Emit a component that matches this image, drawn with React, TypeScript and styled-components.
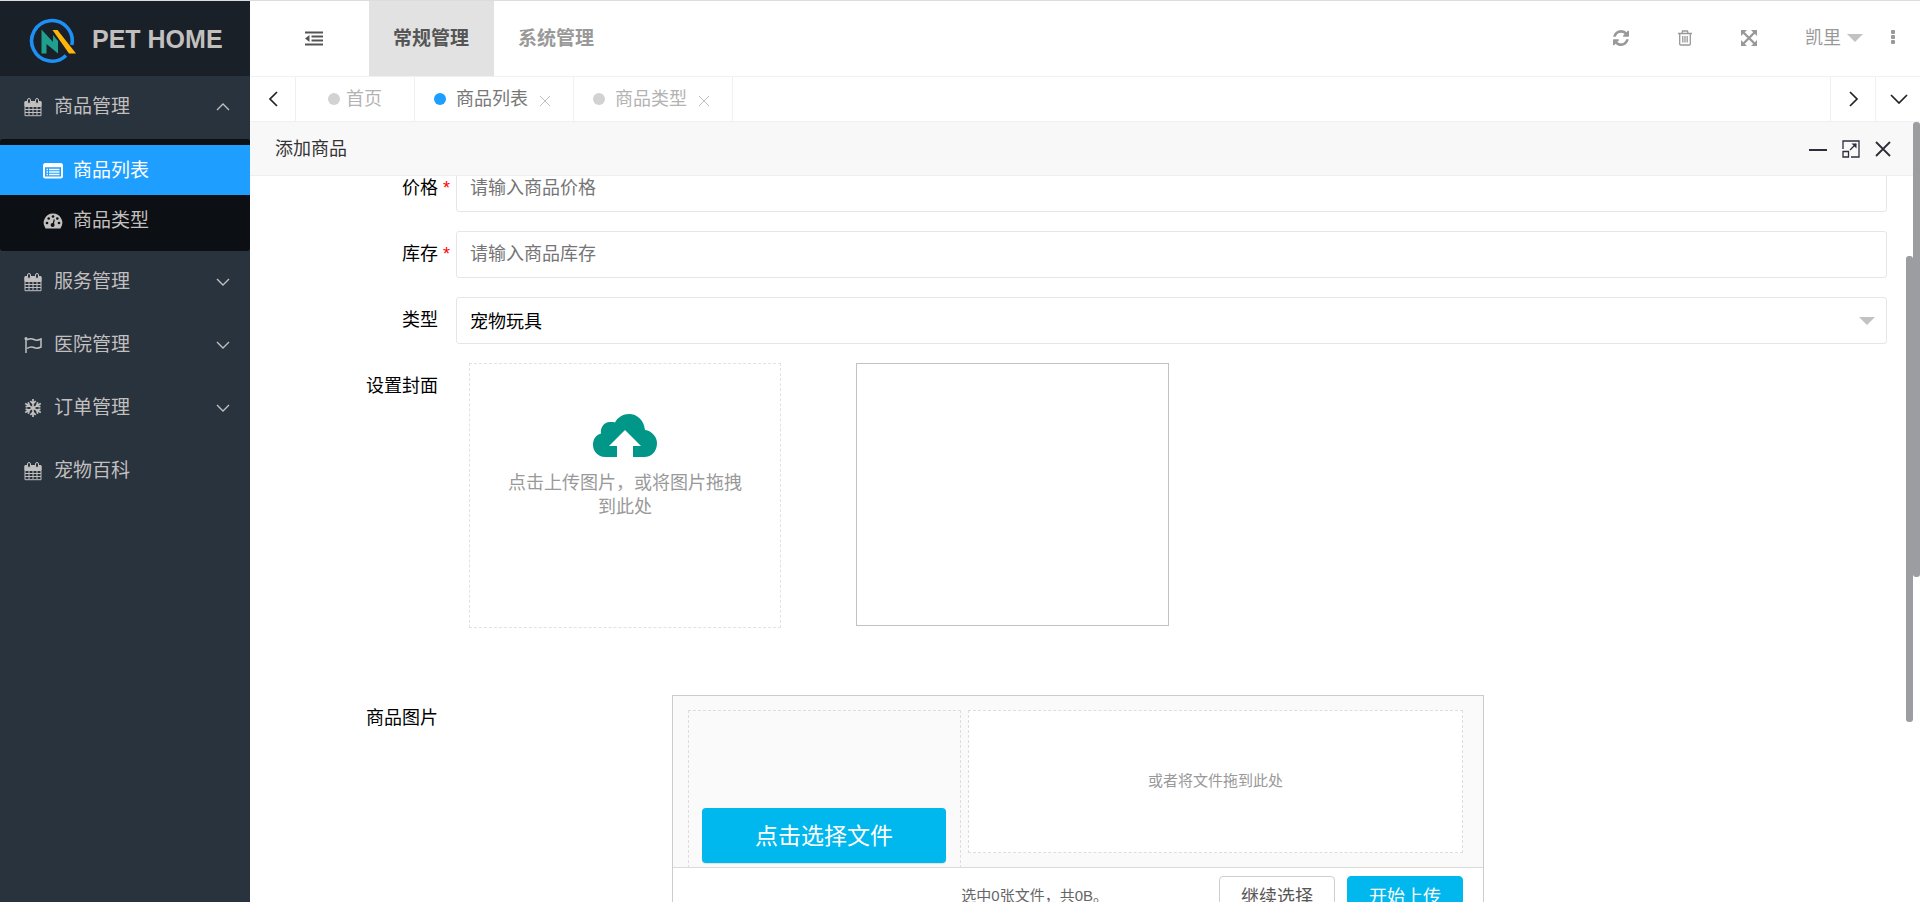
import React from 'react';
import styled, { createGlobalStyle, css } from 'styled-components';

const Global = createGlobalStyle`
  * { box-sizing: border-box; }
  html, body, #root { height: 100%; }
  body {
    margin: 0;
    overflow: hidden;
    background: #fff;
    color: #000;
    font-family: "Liberation Sans", "Noto Sans CJK SC", sans-serif;
    font-size: 18px;
    line-height: 24px;
  }
  button, input, select { font: inherit; color: inherit; }
  button { padding: 0; border: 0; background: none; cursor: pointer; }
  a { color: inherit; text-decoration: none; }
  svg { display: block; flex: none; }
  ul { margin: 0; padding: 0; list-style: none; }
`;

const Shell = styled.div`
  display: flex;
  height: 100vh;
  border-top: 1px solid #dcdcdc;
`;

/* ---------- sidebar ---------- */

const Sidebar = styled.aside`
  flex: none;
  width: 250px;
  background: #28333e;
  color: #c2bfbf;
  font-size: 19px;
`;

const Brand = styled.a`
  display: flex;
  align-items: center;
  gap: 16px;
  height: 75px;
  padding: 4px 0 0 28px;
  background: #192027;
  font-size: 25px;
  font-weight: bold;
  white-space: nowrap;
  line-height: 24px;
`;

const BrandName = styled.span`
  padding-bottom: 4px;
`;

const itemBase = css`
  display: flex;
  align-items: center;
  width: 100%;
  text-align: left;
`;

const MenuItem = styled.button`
  ${itemBase}
  gap: 12px;
  height: 63px;
  padding: 0 20px 1px 24px;
`;

const MenuText = styled.span`
  flex: 1;
`;

const SubMenu = styled.ul`
  padding: 6px 0;
  border-radius: 3px;
  background: #0c0f13;
`;

const SubItem = styled.a<{ $active?: boolean }>`
  ${itemBase}
  gap: 10px;
  height: 50px;
  padding: 1px 0 0 43px;
  background: ${p => (p.$active ? '#1e9fff' : 'transparent')};
  color: ${p => (p.$active ? '#fff' : 'inherit')};
`;

/* ---------- header ---------- */

const Main = styled.div`
  flex: 1;
  min-width: 0;
  display: flex;
  flex-direction: column;
`;

const Header = styled.header`
  display: flex;
  flex: none;
  height: 76px;
  border-bottom: 1px solid #f1f1f1;
  color: #999;
`;

const FoldButton = styled.button`
  display: flex;
  align-items: center;
  padding: 0 46px 0 55px;
  color: #555;
`;

const TopTab = styled.a<{ $active?: boolean }>`
  display: flex;
  align-items: center;
  padding: 0 25px 0 24px;
  font-size: 19px;
  font-weight: bold;
  background: ${p => (p.$active ? '#e2e2e2' : 'transparent')};
  color: ${p => (p.$active ? '#555' : '#999')};
`;

const Tools = styled.div`
  display: flex;
  align-items: center;
  gap: 48px;
  margin-left: auto;
  padding: 0 24px 2px 0;
`;

const UserGroup = styled.div`
  display: flex;
  align-items: center;
  gap: 28px;
`;

const ToolButton = styled.button`
  display: flex;
  align-items: center;
  gap: 6px;
`;

const Caret = styled.span`
  border: 8px solid transparent;
  border-top-color: #c2c2c2;
  border-bottom-width: 0;
`;

/* ---------- page tabs ---------- */

const TabBar = styled.div`
  display: flex;
  flex: none;
  height: 45px;
  border-bottom: 1px solid #f0f0f0;
`;

const TabArrow = styled.button<{ $side: 'left' | 'right' }>`
  display: flex;
  align-items: center;
  justify-content: center;
  width: ${p => (p.$side === 'left' ? 46 : 45)}px;
  padding-left: ${p => (p.$side === 'left' ? 0 : 2)}px;
  border-${p => (p.$side === 'left' ? 'right' : 'left')}: 1px solid #f0f0f0;
  color: #222;
`;

const TabList = styled.div`
  display: flex;
  flex: 1;
`;

const PageTab = styled.div<{ $active?: boolean; $home?: boolean }>`
  display: flex;
  align-items: center;
  padding: ${p => (p.$home ? '0 32px 1px' : '0 23px 1px 19px')};
  border-right: 1px solid #f0f0f0;
  color: ${p => (p.$active ? '#777' : '#b3b3b3')};
`;

const Dot = styled.span<{ $active?: boolean; $home?: boolean }>`
  width: 12px;
  height: 12px;
  margin-right: ${p => (p.$home ? 6 : 10)}px;
  border-radius: 50%;
  background: ${p => (p.$active ? '#1e9fff' : '#d2d2d2')};
`;

const CloseTab = styled.button`
  display: flex;
  padding-top: 4px;
  margin-left: 12px;
  color: #c0c0c0;
`;

/* ---------- dialog ---------- */

const Content = styled.main`
  position: relative;
  display: flex;
  flex: 1;
  flex-direction: column;
  min-height: 0;
  padding-right: 7px;
`;

const TitleBar = styled.div`
  display: flex;
  flex: none;
  align-items: center;
  height: 54px;
  padding: 0 22px 0 25px;
  border-bottom: 1px solid #eee;
  background: #f8f8f8;
  color: #333;
`;

const Title = styled.h1`
  flex: 1;
  margin: 0;
  font-size: 18px;
  font-weight: normal;
`;

const WindowButtons = styled.div`
  display: flex;
  align-items: center;
  gap: 15px;
  color: #2e2d3c;
`;

const FormArea = styled.div`
  flex: 1;
  min-height: 0;
  overflow: hidden;
`;

const Form = styled.form`
  display: flex;
  flex-direction: column;
  gap: 19px;
  margin-top: -11px;
  padding-right: 26px;
`;

const Row = styled.div`
  display: flex;
`;

const Label = styled.label`
  flex: none;
  display: flex;
  justify-content: flex-end;
  width: 206px;
  height: 47px;
  padding: 11px 18px 0 0;
`;

const Required = styled.span`
  width: 0;
  color: #f00;
  text-indent: 5px;
`;

const Input = styled.input`
  flex: 1;
  min-width: 0;
  height: 47px;
  padding: 0 13px;
  border: 1px solid #e6e6e6;
  border-radius: 3px;
  background: #fff;
  outline: none;
  &::placeholder { color: #757575; opacity: 1; }
`;

const SelectWrap = styled.div`
  position: relative;
  display: flex;
  flex: 1;
`;

const Select = styled.select`
  flex: 1;
  height: 47px;
  padding: 2px 13px 0;
  border: 1px solid #e6e6e6;
  border-radius: 3px;
  background: #fff;
  appearance: none;
  outline: none;
`;

const SelectCaret = styled(Caret)`
  position: absolute;
  top: 20px;
  right: 12px;
  pointer-events: none;
`;

const CoverArea = styled.div`
  display: flex;
  align-items: flex-start;
  gap: 75px;
  padding-left: 13px;
  margin-bottom: 48px;
`;

const CoverDrop = styled.button`
  display: flex;
  flex-direction: column;
  align-items: center;
  gap: 13px;
  width: 312px;
  height: 265px;
  padding: 50px 37px;
  border: 1px dashed #e2e2e2;
  background: #fff;
  color: #999;
`;

const CoverPreview = styled.div`
  width: 313px;
  height: 263px;
  border: 1px solid #c2c2c2;
`;

const Uploader = styled.section`
  width: 812px;
  margin-left: 216px;
  border: 1px solid #ccc;
`;

const Queue = styled.div`
  display: flex;
  align-items: flex-start;
  gap: 7px;
  height: 172px;
  padding: 14px 20px 0 15px;
  overflow: hidden;
  border-bottom: 1px solid #dadada;
  background: #fafafa;
`;

const PickZone = styled.div`
  width: 273px;
  height: 298px;
  padding: 97px 14px 0 13px;
  border: 1px dashed #ddd;
`;

const PickButton = styled.button`
  width: 100%;
  height: 55px;
  border-radius: 4px;
  background: #00b7ee;
  box-shadow: 0 1px 1px rgba(0, 0, 0, 0.1);
  color: #fff;
  font-size: 23px;
`;

const DropZone = styled.div`
  display: flex;
  flex: 1;
  align-items: center;
  justify-content: center;
  height: 143px;
  padding-bottom: 2px;
  border: 1px dashed #ddd;
  background: #fff;
  color: #999;
  font-size: 15px;
`;

const StatusBar = styled.div`
  display: flex;
  align-items: flex-start;
  justify-content: flex-end;
  gap: 12px;
  height: 79px;
  padding: 8px 20px 0 0;
`;

const Status = styled.p`
  margin: 0 99px 0 0;
  padding-top: 8px;
  color: #666;
  font-size: 15px;
`;

const StatusButton = styled.button<{ $primary?: boolean }>`
  height: 50px;
  padding: 0 21px 8px;
  border: 1px solid ${p => (p.$primary ? '#00b7ee' : '#cfcfcf')};
  border-radius: 4px;
  background: ${p => (p.$primary ? '#00b7ee' : '#fff')};
  color: ${p => (p.$primary ? '#fff' : '#565656')};
`;

const ScrollThumb = styled.div<{ $inner?: boolean }>`
  position: absolute;
  right: ${p => (p.$inner ? 7 : 0)}px;
  top: ${p => (p.$inner ? 134 : 0)}px;
  width: 7px;
  height: ${p => (p.$inner ? 466 : 455)}px;
  border-radius: 3px;
  background: #9c9da1;
`;

/* ---------- icons ---------- */

const Logo = () => (
  <svg width="48" height="46" viewBox="0 0 48 46" fill="none">
    <path d="M43.800 27A20.300 20.300 0 1 0 38 37.500" stroke="#1e90f5" strokeWidth="3.600" />
    <path d="M13.500 11.500L25 24V17L30 23V35.500L18.500 26V35.500H13.500Z" fill="#1fa08f" />
    <path d="M24.500 12H29.500L48 35.500H41Z" fill="#ffb60a" />
  </svg>
);

const CalendarIcon = () => (
  <svg width="18" height="19" viewBox="0 0 18 19" fill="none" stroke="currentColor">
    <path d="M1 4V17.700H17V4M1 8.500H17M1 11.500H17M1 14.500H17M5 8V17M9 8V17M13 8V17" />
    <path d="M0.500 4Q0.500 3 1.500 3H16.500Q17.500 3 17.500 4V8H0.500Z" fill="currentColor" stroke="none" />
    <rect x="3.500" y="0.500" width="3" height="5" rx="1.500" fill="#28333e" strokeWidth="1" />
    <rect x="11.500" y="0.500" width="3" height="5" rx="1.500" fill="#28333e" strokeWidth="1" />
  </svg>
);

const FlagIcon = () => (
  <svg width="18" height="16" viewBox="0 0 18 16" fill="none" stroke="currentColor" strokeWidth="1.500">
    <path d="M2 1V16M3 3C6 1 8 1.500 10 2.500S14 3.500 17 2V10C14 11.500 12 11.500 10 10.500S6 9.500 3 11.500" />
    <circle cx="2" cy="1.500" r="1.500" fill="currentColor" stroke="none" />
  </svg>
);

const SnowIcon = () => (
  <svg width="18" height="18" viewBox="0 0 18 18" fill="none" stroke="currentColor" strokeWidth="1.700">
    {[0, 60, 120, 180, 240, 300].map(a => (
      <path key={a} transform={`rotate(${a} 9 9)`} d="M9 9V0M6.300 2L9 4.700L11.700 2" />
    ))}
  </svg>
);

const ListIcon = () => (
  <svg width="20" height="16" viewBox="0 0 20 16" fill="none" stroke="currentColor">
    <rect x="1" y="1" width="18" height="13.500" rx="1.500" strokeWidth="2" />
    <path d="M1 2.500H19" strokeWidth="3.500" />
    <path d="M3.500 6.500H5M6 6.500H16.500M3.500 9H5M6 9H16.500M3.500 11.500H5M6 11.500H16.500" strokeWidth="1.400" />
  </svg>
);

const GaugeIcon = () => (
  <svg width="20" height="16" viewBox="0 0 20 16">
    <path d="M10 0.500A9.300 9.300 0 0 0 2.300 15Q2.500 15.500 3 15.500H17Q17.500 15.500 17.700 15A9.300 9.300 0 0 0 10 0.500Z" fill="currentColor" />
    <g fill="#0c0f13">
      <circle cx="4" cy="10" r="1.300" /><circle cx="5.700" cy="5.500" r="1.300" />
      <circle cx="10" cy="3.500" r="1.300" /><circle cx="14.300" cy="5.500" r="1.300" />
      <circle cx="16" cy="10" r="1.300" /><circle cx="9.600" cy="12" r="2" />
    </g>
    <path d="M10 12L11.300 6.500" stroke="#0c0f13" strokeWidth="1.200" />
  </svg>
);

const Chevron = ({ d, w, h, s = 1.4 }: { d: string; w: number; h: number; s?: number }) => (
  <svg width={w} height={h} viewBox={`0 0 ${w} ${h}`} fill="none" stroke="currentColor" strokeWidth={s}>
    <path d={d} />
  </svg>
);

const OutdentIcon = () => (
  <svg width="18" height="15" viewBox="0 0 18 15" fill="none" stroke="currentColor" strokeWidth="2">
    <path d="M0 1.500H18M6.500 5.500H18M6.500 9.500H18M0 13.500H18" />
    <path d="M0 7.500L4.500 4V11Z" fill="currentColor" stroke="none" />
  </svg>
);

const RefreshIcon = () => (
  <svg width="16" height="16" viewBox="0 0 1536 1536" fill="currentColor">
    <path d="M1511 928q0 5-1 7-64 268-268 434.500T764 1536q-146 0-282.500-55T238 1324l-129 129q-19 19-45 19t-45-19-19-45V960q0-26 19-45t45-19h448q26 0 45 19t19 45-19 45l-137 137q71 66 161 102t187 36q134 0 250-65t186-179q11-17 53-117 8-23 30-23h192q13 0 22.500 9.500t9.500 22.500zm25-800v448q0 26-19 45t-45 19h-448q-26 0-45-19t-19-45 19-45l138-138Q969 256 768 256q-134 0-250 65T332 500q-11 17-53 117-8 23-30 23H50q-13 0-22.500-9.500T18 608v-7q65-268 270-434.500T768 0q146 0 284 55.500T1297 212l130-129q19-19 45-19t45 19 19 45z" />
  </svg>
);

const TrashIcon = () => (
  <svg width="16" height="16" viewBox="0 0 16 16" fill="none" stroke="currentColor" strokeWidth="1.300">
    <path d="M1 3.500H15M5 3.500L5.500 1H10.500L11 3.500M2.700 3.500V14Q2.700 15 3.700 15H12.300Q13.300 15 13.300 14V3.500M5.800 6V12.500M8 6V12.500M10.200 6V12.500" />
  </svg>
);

const ExpandIcon = () => (
  <svg width="16" height="16" viewBox="0 0 16 16" fill="currentColor">
    <path d="M0 0H6L0 6ZM16 0V6L10 0ZM0 16V10L6 16ZM16 16H10L16 10Z" />
    <path d="M2 2L14 14M14 2L2 14" stroke="currentColor" strokeWidth="2.400" />
  </svg>
);

const MoreIcon = () => (
  <svg width="5" height="15" viewBox="0 0 5 15" fill="currentColor">
    <rect width="4" height="4" y="0" rx="1" /><rect width="4" height="4" y="5" rx="1" /><rect width="4" height="4" y="10" rx="1" />
  </svg>
);

const MaximizeIcon = () => (
  <svg width="18" height="18" viewBox="0 0 18 18" fill="none" stroke="currentColor" strokeWidth="1.300">
    <path d="M1 9V1H17V17H9M1 11.500H6.500V17H1ZM8 10L14 4" />
    <path d="M9.500 3.500H14.500V8.500Z" fill="currentColor" stroke="none" />
  </svg>
);

const CloudIcon = () => (
  <svg width="64" height="44" viewBox="0 0 64 44">
    <path d="M12 43C5 43 0 37 0 31C0 25 3 21 8 19.500C7 13 12 7 18 8C20 8 21 8 22 8.500C25 3 30 0 36 0C44 0 51 6 52 16C59 17 64 23 64 29C64 37 59 43 51 43H40V32H48L32 16L16 32H24V43Z" fill="#009688" />
  </svg>
);

const DOWN = 'M1 1L7 7L13 1';
const CROSS = 'M0 0L10 10M10 0L0 10';
const menu = [
  { text: '服务管理', icon: <CalendarIcon />, fold: true },
  { text: '医院管理', icon: <FlagIcon />, fold: true },
  { text: '订单管理', icon: <SnowIcon />, fold: true },
  { text: '宠物百科', icon: <CalendarIcon />, fold: false },
];

export default function App() {
  return (
    <>
      <Global />
      <Shell>
        <Sidebar>
          <Brand href="#">
            <Logo />
            <BrandName>PET HOME</BrandName>
          </Brand>
          <nav>
            <MenuItem>
              <CalendarIcon />
              <MenuText>商品管理</MenuText>
              <Chevron w={14} h={8} d="M1 7L7 1L13 7" />
            </MenuItem>
            <SubMenu>
              <li><SubItem href="#" $active><ListIcon />商品列表</SubItem></li>
              <li><SubItem href="#"><GaugeIcon />商品类型</SubItem></li>
            </SubMenu>
            {menu.map(m => (
              <MenuItem key={m.text}>
                {m.icon}
                <MenuText>{m.text}</MenuText>
                {m.fold && <Chevron w={14} h={8} d={DOWN} />}
              </MenuItem>
            ))}
          </nav>
        </Sidebar>

        <Main>
          <Header>
            <FoldButton aria-label="折叠菜单"><OutdentIcon /></FoldButton>
            <TopTab href="#" $active>常规管理</TopTab>
            <TopTab href="#">系统管理</TopTab>
            <Tools>
              <ToolButton aria-label="刷新"><RefreshIcon /></ToolButton>
              <ToolButton aria-label="清理"><TrashIcon /></ToolButton>
              <ToolButton aria-label="全屏"><ExpandIcon /></ToolButton>
              <UserGroup>
                <ToolButton>凯里<Caret /></ToolButton>
                <ToolButton aria-label="更多"><MoreIcon /></ToolButton>
              </UserGroup>
            </Tools>
          </Header>

          <TabBar>
            <TabArrow $side="left" aria-label="向左"><Chevron w={10} h={16} s={1.7} d="M9 1L2 8L9 15" /></TabArrow>
            <TabList>
              <PageTab $home><Dot $home />首页</PageTab>
              <PageTab $active>
                <Dot $active />商品列表
                <CloseTab aria-label="关闭"><Chevron w={10} h={10} s={1} d={CROSS} /></CloseTab>
              </PageTab>
              <PageTab>
                <Dot />商品类型
                <CloseTab aria-label="关闭"><Chevron w={10} h={10} s={1} d={CROSS} /></CloseTab>
              </PageTab>
            </TabList>
            <TabArrow $side="right" aria-label="向右"><Chevron w={10} h={16} s={1.7} d="M1 1L8 8L1 15" /></TabArrow>
            <TabArrow $side="right" aria-label="展开"><Chevron w={18} h={10} s={1.7} d="M1 1L9 9L17 1" /></TabArrow>
          </TabBar>

          <Content>
            <TitleBar>
              <Title>添加商品</Title>
              <WindowButtons>
                <ToolButton aria-label="最小化"><Chevron w={18} h={18} s={2} d="M0 10H18" /></ToolButton>
                <ToolButton aria-label="最大化"><MaximizeIcon /></ToolButton>
                <ToolButton aria-label="关闭"><Chevron w={16} h={16} s={1.8} d="M1 1L15 15M15 1L1 15" /></ToolButton>
              </WindowButtons>
            </TitleBar>
            <FormArea>
              <Form>
                <Row>
                  <Label htmlFor="price">价格<Required>*</Required></Label>
                  <Input id="price" placeholder="请输入商品价格" />
                </Row>
                <Row>
                  <Label htmlFor="stock">库存<Required>*</Required></Label>
                  <Input id="stock" placeholder="请输入商品库存" />
                </Row>
                <Row>
                  <Label htmlFor="kind">类型</Label>
                  <SelectWrap>
                    <Select id="kind"><option>宠物玩具</option></Select>
                    <SelectCaret />
                  </SelectWrap>
                </Row>
                <Row>
                  <Label htmlFor="cover">设置封面</Label>
                  <CoverArea>
                    <CoverDrop id="cover" type="button">
                      <CloudIcon />
                      点击上传图片，或将图片拖拽到此处
                    </CoverDrop>
                    <CoverPreview />
                  </CoverArea>
                </Row>
                <Row>
                  <Label htmlFor="pick">商品图片</Label>
                  <Uploader>
                    <Queue>
                      <PickZone><PickButton id="pick" type="button">点击选择文件</PickButton></PickZone>
                      <DropZone>或者将文件拖到此处</DropZone>
                    </Queue>
                    <StatusBar>
                      <Status>选中0张文件，共0B。</Status>
                      <StatusButton type="button">继续选择</StatusButton>
                      <StatusButton type="button" $primary>开始上传</StatusButton>
                    </StatusBar>
                  </Uploader>
                </Row>
              </Form>
            </FormArea>
            <ScrollThumb />
            <ScrollThumb $inner />
          </Content>
        </Main>
      </Shell>
    </>
  );
}
